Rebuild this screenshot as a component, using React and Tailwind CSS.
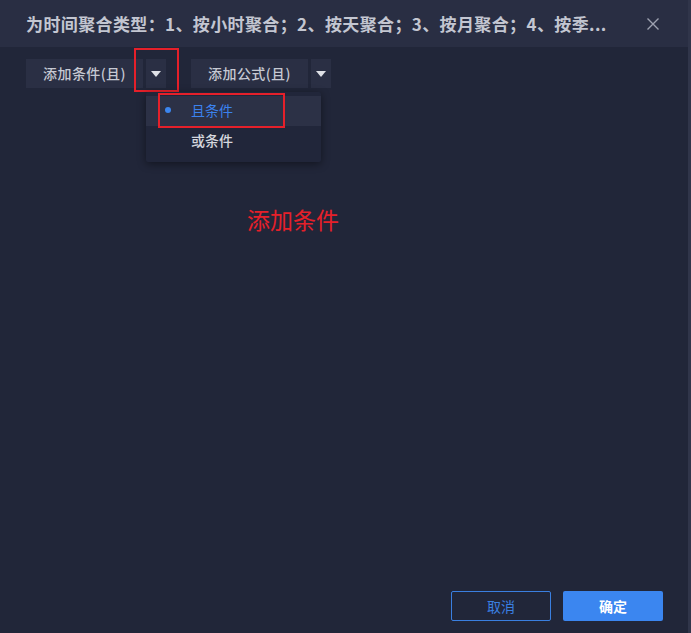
import React from "react";

export default function App() {
  const font = { fontFamily: '"Noto Sans CJK SC", "Noto Sans", sans-serif' };
  return (
    <div className="w-[691px] h-[633px] flex bg-[#212639] overflow-hidden" style={font}>
      <div className="flex-1 flex flex-col relative">
        <div className="h-[47px] bg-[#292e43] flex items-center pl-[26px] pr-[28px] shrink-0">
          <div className="flex-1 text-[17px] font-bold text-[#c3c6d1] leading-none tracking-[0.38px] whitespace-nowrap">
            为时间聚合类型：1、按小时聚合；2、按天聚合；3、按月聚合；4、按季...
          </div>
          <svg width="14" height="14" viewBox="0 0 14 14" className="ml-2">
            <path d="M1.5 1.5 L12.5 12.5 M12.5 1.5 L1.5 12.5" stroke="#9da1b0" strokeWidth="1.4" />
          </svg>
        </div>
        <div className="flex items-center pl-[26px] pt-[12px] gap-[25px]">
          <div className="flex gap-[3px] relative">
            <div className="w-[117px] h-[29px] bg-[#2a2f44] text-[#c6c9d3] text-[14px] tracking-[0.4px] font-medium flex items-center justify-center">
              添加条件(且)
            </div>
            <div className="w-[20px] h-[29px] bg-[#2a2f44] flex items-center justify-center">
              <svg width="10" height="6" viewBox="0 0 10 6"><path d="M0 0 H10 L5 6 Z" fill="#dfe1e7" /></svg>
            </div>
            <div className="absolute left-[108px] top-[-11px] w-[45px] h-[44px] border-2 border-[#e5202a]" />
            <div className="absolute left-[120px] top-[33px] w-[175px] h-[70px] bg-[#21263a] shadow-[0_2px_8px_rgba(0,0,0,0.45)] rounded-[2px] pt-[4px] z-10">
              <div className="h-[30px] bg-[#2c3146] flex items-center relative pb-[2px]">
                <span className="w-[6px] h-[6px] rounded-full bg-[#3b86f0] ml-[19px]" />
                <span className="ml-[20px] text-[14px] text-[#3b82ee]">且条件</span>
                <div className="absolute left-[12px] top-[-3px] w-[127px] h-[35px] border-2 border-[#e5202a]" />
              </div>
              <div className="h-[30px] flex items-center pl-[45px] pb-[2px] text-[14px] font-medium text-[#d5d7de]">或条件</div>
            </div>
          </div>
          <div className="flex gap-[3px]">
            <div className="w-[117px] h-[29px] bg-[#2a2f44] text-[#c6c9d3] text-[14px] tracking-[0.4px] font-medium flex items-center justify-center">
              添加公式(且)
            </div>
            <div className="w-[20px] h-[29px] bg-[#2a2f44] flex items-center justify-center">
              <svg width="10" height="6" viewBox="0 0 10 6"><path d="M0 0 H10 L5 6 Z" fill="#dfe1e7" /></svg>
            </div>
          </div>
        </div>
        <div className="pl-[247px] pt-[120px] text-[23px] text-[#e5202a] leading-none">添加条件</div>
        <div className="flex-1" />
        <div className="flex justify-end gap-[12px] pr-[25px] pb-[12px]">
          <div className="w-[100px] h-[30px] border border-[#3a7fe0] rounded-[2px] text-[#3a7fe0] text-[14px] flex items-center justify-center">取消</div>
          <div className="w-[100px] h-[30px] bg-[#3b86f0] rounded-[2px] text-white text-[14px] font-bold flex items-center justify-center">确定</div>
        </div>
      </div>
      <div className="w-[3px] bg-[#30354a]" />
    </div>
  );
}
